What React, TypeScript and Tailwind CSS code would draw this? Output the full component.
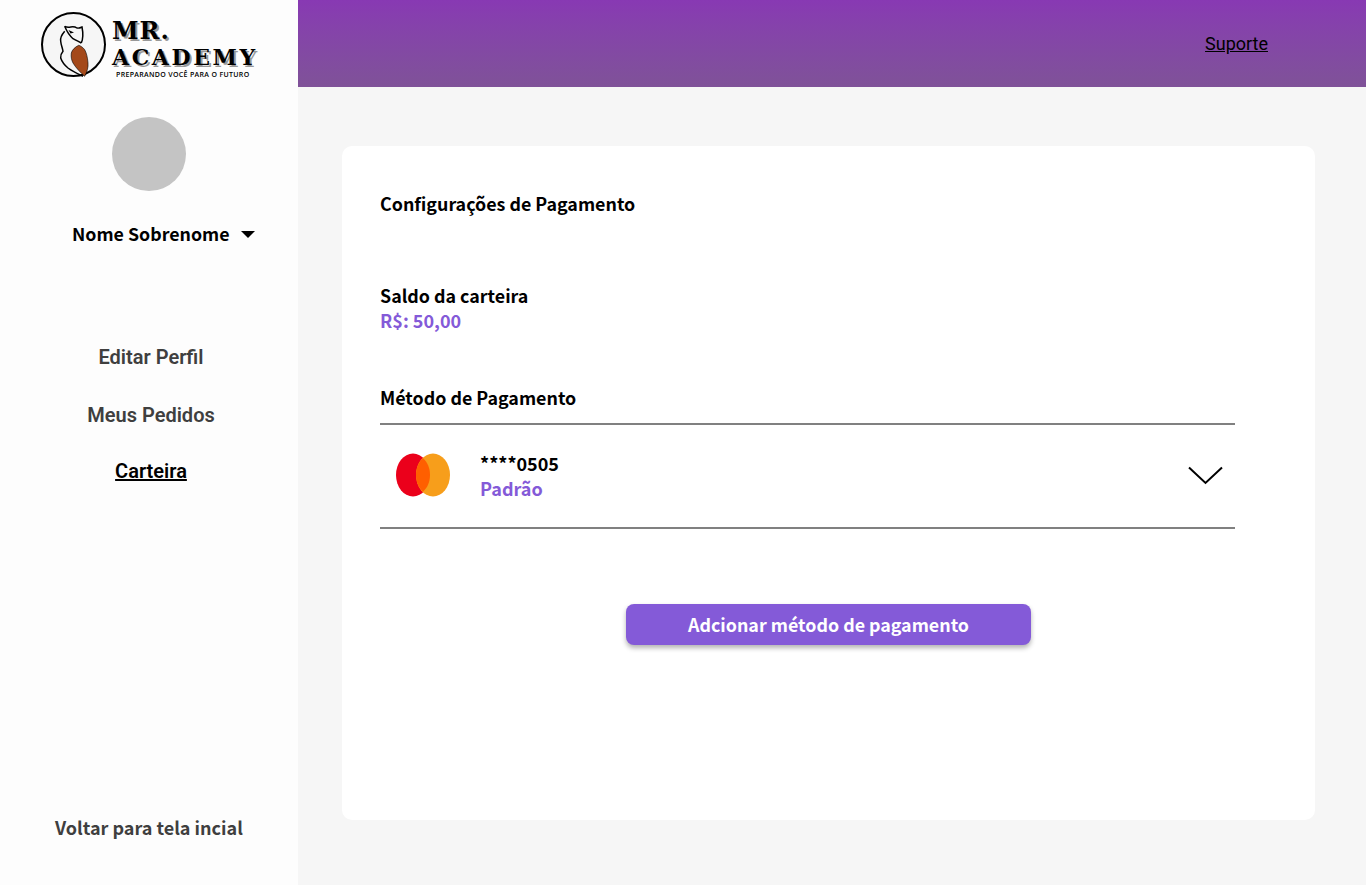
const sourceFont = "font-['Noto_Sans_CJK_SC','Noto_Sans',sans-serif]";

function Logo() {
  return (
    <div className="flex h-[87px] items-start pl-[41px] pt-[12px]">
      <svg width="66" height="66" viewBox="0 0 66 66" className="shrink-0">
        <circle cx="32.5" cy="32.5" r="31.5" fill="#f6f6f6" stroke="#000" strokeWidth="2" />
        <path
          d="M23.7 14.3 C29 17 31 12.5 36 16 C38 16.5 40 15.5 41 15 C42 20 42 27 40.3 31"
          fill="none"
          stroke="#000"
          strokeWidth="1.5"
        />
        <path d="M23.7 14.3 C26 20 29 24 32 26.7 C35 28.5 38 29.5 40.3 31" fill="none" stroke="#000" strokeWidth="1.5" />
        <path
          d="M23.7 19.3 C20.5 23 19 26 19.7 29.3 C20 33 21.5 36 22 39.3 C20.5 41 19.5 43.5 19.7 46 C21 50 24 53.5 27 56 C31 59 37 62 42 64.3"
          fill="none"
          stroke="#000"
          strokeWidth="1.5"
        />
        <path d="M27.5 18 L33 20.5 L29.5 21.5 Z" fill="#000" />
        <path
          d="M37.7 33.3 C34 35 31 38 30.3 41 C29.8 45 30.5 48 32 51 C35 56 40 61 43.7 64.3 C46 60 47.5 55 47 51 C46.5 45 45.5 41 43.7 37.7 C42 35.5 40 34 37.7 33.3 Z"
          fill="#a4491a"
          stroke="#000"
          strokeWidth="0.6"
        />
      </svg>
      <div className="ml-[5px] flex w-[150px] flex-col font-['DejaVu_Serif',serif] font-bold leading-none text-black">
        <span className="mt-[5px] h-[28px] text-[24px] leading-[27px] tracking-[1px] [text-shadow:2px_2px_0_#999]">
          MR.
        </span>
        <span className="h-[24px] whitespace-nowrap text-[22px] leading-[24px] tracking-[2.6px] [text-shadow:2px_2px_0_#999]">
          ACADEMY
        </span>
        <span className="ml-[4px] mt-[1px] whitespace-nowrap font-['Open_Sans',sans-serif] text-[7px] font-semibold leading-[9px] tracking-[0.33px]">
          PREPARANDO VOCÊ PARA O FUTURO
        </span>
      </div>
    </div>
  );
}

function Sidebar() {
  return (
    <aside className="flex h-[885px] w-[298px] shrink-0 flex-col bg-[#fdfdfd]">
      <Logo />
      <div className="mt-[30px] ml-[112px] h-[74px] w-[74px] rounded-full bg-[#c4c4c4]" />
      <div className={`mt-[29px] ml-[72px] flex h-[26px] items-center text-[17.8px] font-bold leading-[26px] text-black ${sourceFont}`}>
        Nome Sobrenome
        <span className="ml-[11px] mt-[3px] h-0 w-0 border-x-[7px] border-t-[7px] border-x-transparent border-t-black" />
      </div>
      <nav className="mt-[99px] flex w-[302px] flex-col items-center font-['Roboto',sans-serif] text-[20px] font-semibold leading-[24px] text-[#3f3f3f]">
        <a>Editar Perfil</a>
        <a className="mt-[34px]">Meus Pedidos</a>
        <a className="mt-[32px] text-black underline">Carteira</a>
      </nav>
      <a className={`ml-[55px] mt-[331px] text-[18px] font-bold leading-[26px] text-[#3f3f3f] ${sourceFont}`}>
        Voltar para tela incial
      </a>
    </aside>
  );
}

function CardBrand() {
  return (
    <svg width="54" height="44" viewBox="0 0 54 44" className="mt-[-3px] shrink-0">
      <ellipse cx="17" cy="22" rx="17" ry="21.5" fill="#eb001b" />
      <ellipse cx="37" cy="22" rx="17" ry="21.5" fill="#f79e1b" />
      <path d="M27 5.3 C31.5 9.3 34 15.3 34 22 C34 28.7 31.5 34.7 27 38.7 C22.5 34.7 20 28.7 20 22 C20 15.3 22.5 9.3 27 5.3 Z" fill="#ff5f00" />
    </svg>
  );
}

export default function App() {
  return (
    <div className="flex h-[885px] w-[1366px] overflow-hidden bg-[#f6f6f6]">
      <Sidebar />
      <div className="flex min-w-0 flex-1 flex-col">
        <header className="flex h-[87px] items-center justify-end bg-gradient-to-b from-[#8839b3] to-[#7f5298] pr-[98px]">
          <a className="font-['Roboto',sans-serif] text-[18px] leading-[24px] text-black underline">Suporte</a>
        </header>
        <main className="flex-1 pl-[44px] pt-[59px]">
          <section className={`flex h-[674px] w-[973px] flex-col rounded-[10px] bg-white pl-[38px] ${sourceFont}`}>
            <h1 className="mt-[44px] text-[17.85px] font-bold leading-[26px] text-black">Configurações de Pagamento</h1>
            <h2 className="mt-[66px] text-[17.85px] font-bold leading-[26px] text-black">Saldo da carteira</h2>
            <p className="text-[18px] font-bold leading-[24px] text-[#845ad8]">R$: 50,00</p>
            <div className="mt-[52px] w-[855px] border-b-2 border-[#808080] pb-[13px]">
              <h2 className="text-[17.85px] font-bold leading-[26px] text-black">Método de Pagamento</h2>
            </div>
            <div className="flex h-[104px] w-[855px] items-center border-b-2 border-[#808080] pl-[16px] pr-[12px]">
              <CardBrand />
              <div className="ml-[30px] flex flex-col text-[18px] font-bold leading-[25px]">
                <span className="text-black">****0505</span>
                <span className="text-[#845ad8]">Padrão</span>
              </div>
              <svg width="35" height="19" viewBox="0 0 35 19" fill="none" className="ml-auto mt-[-1px]">
                <path d="M1 1.5 L17.5 17 L34 1.5" stroke="#000" strokeWidth="2" />
              </svg>
            </div>
            <button
              type="button"
              className="ml-[246px] mt-[75px] h-[41px] w-[405px] rounded-[8px] bg-[#845ad8] text-[17.85px] font-bold text-white shadow-[0_3px_5px_rgba(0,0,0,0.3)]"
            >
              Adcionar método de pagamento
            </button>
          </section>
        </main>
      </div>
    </div>
  );
}
